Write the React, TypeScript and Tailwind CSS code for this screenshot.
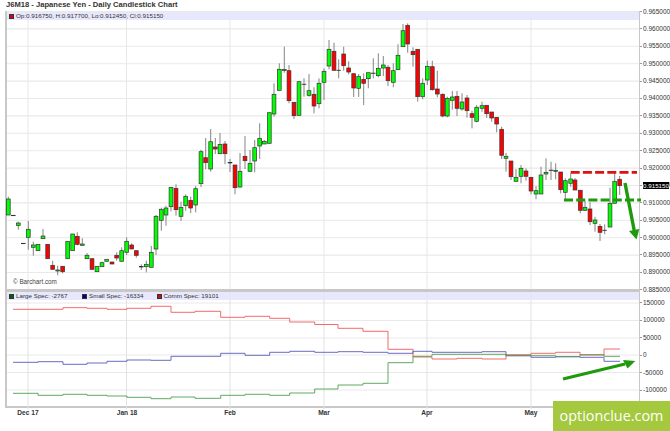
type Candle = [number, number, number, number, number, "G" | "R"];

const candles: Candle[] = [
  [8.3,196.7,199,215,215,"G"],[13.3,215.3,215.3,215.6,215.6,"G"],[18.3,221.7,223,225.5,229.7,"G"],[23.3,243.3,243.3,243.6,243.6,"G"],
  [28.3,221,229.3,237.3,249.7,"G"],[33.3,241.7,245,247.3,255.7,"G"],[38,244.3,244.3,250.7,250.7,"G"],[43,229,236,238.7,238.7,"G"],
  [47.7,244.3,244.3,258.7,258.7,"R"],[52.7,260.7,265.3,269.3,269.3,"R"],[57.7,265.7,270,271,275.3,"G"],[62.7,266.3,266.3,271.7,273.3,"R"],
  [67.7,241.3,241.3,258.7,258.7,"G"],[72.7,234,234,250.7,250.7,"G"],[77.3,232.3,236.3,244.3,245.3,"R"],[82.3,238.3,244,245.3,245.6,"G"],
  [87,253,255.3,258.7,258.7,"G"],[92,258.7,258.7,269.3,269.3,"R"],[97,266.3,266.3,271.7,271.7,"G"],[102,261.7,262.7,266.7,266.7,"G"],
  [106.7,259.3,259.3,261.3,261.3,"G"],[112,262,262,264,264,"R"],[116.7,252.3,255.3,258,260.7,"R"],[121.7,247.3,250.7,261.3,261.3,"G"],
  [126.7,237.3,241.3,252.3,255,"G"],[131.7,243.3,245,249,249,"R"],[136.3,250.7,250.7,255.3,257.7,"R"],[141.3,264.3,266.6,267,270,"R"],
  [146.3,260.7,264.3,266.7,272.3,"G"],[151.3,246,252.3,267.3,267.3,"G"],[156,215,216.3,249,255,"G"],[161.3,207.7,209.3,220.3,230.7,"G"],
  [166,205.7,208,215,225.7,"G"],[171,187.3,187.3,206.7,211.3,"G"],[176,184.3,188.3,209.7,215.7,"R"],[181,201.7,207.3,216.3,221,"G"],
  [185.7,194.3,196.3,205.7,210.7,"G"],[190.7,196.7,200.3,208,213,"R"],[195.7,186,188.7,205,212.3,"G"],[201,149.7,151.7,183.7,187,"G"],
  [205.7,138,157.7,162.7,169.3,"R"],[210.7,129,141.7,169,171.7,"G"],[215.3,138,147,149,154,"R"],[220,133,144.5,153.7,153.7,"G"],
  [225,141,144,153.7,164.3,"R"],[230,159,162.4,163,172,"R"],[235,165,165,187.7,194.3,"R"],[240,153,171.3,187,187.7,"G"],
  [245,136,156.3,160.7,169,"R"],[250,150,163.3,171.3,171.3,"G"],[254.7,140,147.7,161,172.3,"G"],[259.7,123.3,138.3,146,159,"G"],
  [264.3,140,141.3,144,144,"G"],[269.3,112.7,112.7,143.3,143.3,"G"],[274,83.3,94.3,114,116.7,"G"],[279.3,63.3,69.3,90.3,90.3,"G"],
  [284.3,46.7,69.5,70.5,72.7,"G"],[289,65,70.7,100.7,103.3,"R"],[294,102.3,102.3,115.7,119,"R"],[299,81.7,81.7,115.3,115.3,"G"],
  [304,78.3,84.2,84.6,96.7,"G"],[309,74,90.7,95.3,96.7,"G"],[314,87.3,94.3,106,113.3,"R"],[319,78.3,83.3,103.7,108.3,"G"],
  [324,68.3,71.3,82.3,100,"G"],[329,40,49.3,66,69.3,"G"],[334,42.7,51.3,70.3,70.3,"R"],[338.7,59.3,70.2,70.6,78.3,"R"],
  [343.7,46.7,54,65.7,70.7,"R"],[348.7,61.3,68,72,74.3,"R"],[353.7,73.7,73.7,88,97,"R"],[358.7,74,76.3,88.3,97,"G"],
  [363.7,73.3,79.3,83.3,105,"R"],[368.3,72.7,72.7,78.7,88.3,"G"],[373.3,58.3,73.1,73.6,78.3,"G"],[378.3,53.3,68.3,75.7,77.3,"G"],
  [383.3,56,65,68,76,"G"],[388,65,67.3,80.7,86,"R"],[393.3,63.3,70.7,82.3,87.3,"G"],[398,44.3,55.3,69.7,69.7,"G"],
  [403,24,30.7,46.7,46.7,"G"],[407.7,23.3,25.3,44,52.7,"R"],[413,47.3,51.3,54.7,66.7,"R"],[417.7,49.3,49.3,96.7,101.7,"R"],
  [422.7,78.3,83.3,96.7,99.3,"G"],[427.3,60.7,66.3,80,85,"G"],[432.3,60.7,66.7,89.7,90.7,"R"],[437.3,70.7,89,94,97.3,"R"],
  [442.7,93.3,94.3,116,117.3,"R"],[447.3,96.7,98.3,116,117.3,"G"],[452.3,91,97,100.3,109.7,"G"],[457,91,96.3,108.3,116,"R"],
  [462,93.3,102,109,110.7,"G"],[467,95,98,110.7,117.7,"R"],[472,110.7,113.7,117.3,128.3,"R"],[476.7,105,107.3,121.3,122.3,"G"],
  [482,101.7,105.7,108.3,111.7,"G"],[486.7,105.3,105.3,113.7,118,"R"],[491.7,112,112,118,121.7,"R"],[496.7,117.3,117.3,124,132.3,"R"],
  [501.7,126.7,129.3,155.3,159,"R"],[506,153,156.3,158.3,171.7,"G"],[511,161,161,176.7,180,"R"],[516,169,177.3,181.3,181.7,"G"],
  [521,165,168.3,176.3,183.3,"G"],[526,168.3,171,176.3,180.7,"R"],[531,177.3,177.3,191,194.3,"R"],[536,186,190.7,194,199.3,"G"],
  [541,166.7,175,194,194,"G"],[546,158.3,172.3,174,180,"G"],[551,161.7,170.1,170.5,180,"R"],[555.7,163.3,170.3,171.3,179.3,"G"],
  [560.7,172,172,189.7,193.3,"R"],[565.3,178.3,180.7,192.3,200,"G"],[570.7,173.3,179,183.3,186.7,"G"],[575,178,180,190,190,"R"],
  [580.3,190.3,190.3,210.3,213.3,"R"],[585,200.7,207.3,210.3,210.6,"G"],[590,202.3,209,221.7,225,"R"],[595,216.7,220,223.3,231.7,"G"],
  [600,224,226.3,232.3,241,"R"],[604.7,224.3,230.2,230.6,234.3,"R"],[610,187.7,203.3,227,227,"G"],[614.7,171.7,181.3,203.3,203.3,"G"],
  [619.7,176,179.3,185.7,195,"R"],
];

const priceGrid = Array.from({ length: 17 }, (_, i) => 11.5 + i * 17.4);
const priceLabels = ["0.965000","0.960000","0.955000","0.950000","0.945000","0.940000","0.935000","0.930000","0.925000","0.920000","0.915000","0.910000","0.905000","0.900000","0.895000","0.890000","0.885000"];
const specLabels = ["150000","100000","50000","0","-50000","-100000"];
const specGrid = [303, 320.5, 338, 355, 372.5, 390];
const xGrid = [28, 126.5, 230, 324, 427, 531];

const red: [number, number][] = [[13,309.3],[63,309.3],[87,307.7],[107,308.3],[127,309.3],[151,308.3],[171,306.3],[195,312.3],[220.7,311.3],[245,317.3],[269.7,316.3],[289.7,318.3],[314.7,322],[338,324.5],[363,328.3],[388,331.3],[413,349.3],[432,357],[457,359],[482,358.3],[506,359],[531,354.7],[555.7,353.3],[580,352.3],[604,355],[620,349]];
const blue: [number, number][] = [[13,362.3],[38,362.3],[63,361.7],[87,364.3],[107,363],[127,361.3],[151,360],[171,360.3],[220.7,356.3],[245,353.3],[269.7,355.3],[289.7,352.3],[314.7,351.3],[338,352.3],[363,351.7],[388,352.3],[413,353.3],[432,351.3],[482,352.3],[506,351.7],[531,355.7],[555.7,357.3],[580,356.7],[604,357.3],[620,361.3]];
const green: [number, number][] = [[13,393.3],[38,393.3],[63,395.3],[87,394.3],[107,395.3],[127,396],[151,397.3],[171,398.7],[195,397],[220.7,398.3],[245,395.3],[269.7,394.3],[289.7,395.3],[314.7,393],[338,389],[363,385],[388,383.3],[413,362.7],[432,356.3],[506,354.3],[531,355.7],[555.7,355.7],[580,356.7],[604,354.7],[620,356.3]];

function stepPath(pts: [number, number][]) {
  let d = `M${pts[0][0]} ${pts[0][1]}`;
  for (let i = 1; i < pts.length; i++) {
    d += `V${pts[i][1]}H${pts[i][0]}`;
  }
  return d;
}

function Swatch({ className }: { className: string }) {
  return <span className={`block w-[5px] h-[5px] border border-[#333] ${className}`} />;
}

export default function App() {
  return (
    <div className="relative flex w-[670px] h-[431px] overflow-hidden bg-white font-['Liberation_Sans',sans-serif] text-[#222]">
      <div className="w-[640px] pl-[5px] flex flex-col">
        <div className="h-[11px] pl-px text-[7.6px] leading-[10px] font-bold text-[#333] whitespace-nowrap">
          J6M18 - Japanese Yen - Daily Candlestick Chart
        </div>

        <div className="relative h-[278px] border-l-2 border-r border-t border-[#c8c8c8]">
          <svg width={632} height={277} className="block overflow-visible">
            <g transform="translate(-7,-12)">
              {priceGrid.map((y) => (
                <line key={y} x1={7} x2={639} y1={y} y2={y} stroke="#e9e9e9" strokeWidth={1.1} />
              ))}
              {xGrid.map((x) => (
                <line key={x} x1={x} x2={x} y1={12} y2={289} stroke="#e8e8e8" strokeWidth={1} />
              ))}
              {candles.map(([x, hi, top, bot, lo, c]) => (
                <g key={x}>
                  <line x1={x} x2={x} y1={hi} y2={lo} stroke="#777" strokeWidth={0.9} />
                  <rect
                    x={x - 1.9}
                    y={top}
                    width={3.8}
                    height={Math.max(bot - top, 0.4)}
                    fill={c === "G" ? "#00ff00" : "#ff0000"}
                    stroke="#333"
                    strokeWidth={0.7}
                  />
                </g>
              ))}
              <line x1={570.7} x2={637} y1={172.3} y2={172.3} stroke="#e01010" strokeWidth={2.8} strokeDasharray="9 3.2" />
              <line x1={564} x2={641} y1={200} y2={200} stroke="#1f9a0e" strokeWidth={2.8} strokeDasharray="9 3.2" />
              <line x1={625} y1={183} x2={634.5} y2={232} stroke="#1f9a0e" strokeWidth={3.4} />
              <polygon points="629,231 639.3,229 636.5,239.5" fill="#1f9a0e" />
            </g>
          </svg>
          <div className="absolute left-0 right-0 top-0 h-[8px] bg-[#e4e4fb]/85 flex items-center gap-[2px] pl-[2px] text-[6.26px] leading-[8px] text-[#333]">
            <Swatch className="bg-[#e00000]" />
            <span className="whitespace-nowrap">Op:0.916750, H:0.917700, Lo:0.912450, Cl:0.915150</span>
          </div>
          <div className="absolute left-[6px] bottom-[3px] text-[6.3px] leading-[8px] text-[#444] whitespace-nowrap">© Barchart.com</div>
        </div>

        <div className="relative h-[119px] border-l-2 border-r border-t-[3px] border-b-2 border-[#c8c8c8]">
          <svg width={632} height={114} className="block overflow-visible">
            <g transform="translate(-7,-292)">
              {specGrid.map((y) => (
                <line key={y} x1={7} x2={639} y1={y} y2={y} stroke="#e9e9e9" strokeWidth={1.1} />
              ))}
              {xGrid.map((x) => (
                <line key={x} x1={x} x2={x} y1={292} y2={409.5} stroke="#e2e2e2" strokeWidth={1} />
              ))}
              <path d={stepPath(red)} fill="none" stroke="#f25a5a" strokeWidth={0.9} />
              <path d={stepPath(blue)} fill="none" stroke="#5a5ac0" strokeWidth={0.9} />
              <path d={stepPath(green)} fill="none" stroke="#4f9f4f" strokeWidth={0.9} />
              <line x1={563} y1={379} x2={625} y2={364} stroke="#1f9a0e" strokeWidth={3.2} />
              <polygon points="623,360 635.3,361 627.5,368.5" fill="#1f9a0e" />
            </g>
          </svg>
          <div className="absolute left-0 right-0 top-0 h-[8px] bg-[#e4e4fb]/85 flex items-center pl-[2px] text-[6.26px] leading-[8px] text-[#333]">
            <div className="w-[73px] flex items-center gap-[2px]">
              <Swatch className="bg-[#006400]" />
              <span className="whitespace-nowrap">Large Spec: -2767</span>
            </div>
            <div className="w-[74.5px] flex items-center gap-[2px]">
              <Swatch className="bg-[#000080]" />
              <span className="whitespace-nowrap">Small Spec: -16334</span>
            </div>
            <div className="flex items-center gap-[2px]">
              <Swatch className="bg-[#c01010]" />
              <span className="whitespace-nowrap">Comm Spec: 19101</span>
            </div>
          </div>
        </div>

        <div className="flex pt-[1px] pl-[3px] text-[6.6px] leading-[8px] font-bold text-[#333]">
          <span className="w-[40px] text-center">Dec 17</span>
          <span className="ml-[59px] w-[40px] text-center">Jan 18</span>
          <span className="ml-[63px] w-[40px] text-center">Feb</span>
          <span className="ml-[54px] w-[40px] text-center">Mar</span>
          <span className="ml-[63px] w-[40px] text-center">Apr</span>
          <span className="ml-[64px] w-[40px] text-center">May</span>
        </div>
      </div>

      <div className="flex-1 flex flex-col pt-[7.5px] text-[6.5px] leading-[8px] text-[#333]">
        <div className="flex flex-col gap-[9.4px]">
          {priceLabels.map((l) => (
            <div key={l} className="h-[8px] flex items-center gap-[1px] whitespace-nowrap">
              <span className="w-[2px] h-px bg-[#999]" />
              {l}
            </div>
          ))}
        </div>
        <div className="mt-[5px] flex flex-col gap-[9.5px]">
          {specLabels.map((l) => (
            <div key={l} className="h-[8px] flex items-center gap-[1px] whitespace-nowrap">
              <span className="w-[2px] h-px bg-[#999]" />
              {l}
            </div>
          ))}
        </div>
      </div>

      <div className="absolute right-[1px] top-[182px] w-[26px] h-[7px] bg-black text-white text-[6.2px] leading-[7px] text-center">0.915150</div>

      <div className="absolute right-0 bottom-0 w-[117px] h-[30px] bg-[#a4c83e] text-white text-[14.4px] leading-[30px] text-center font-['Open_Sans',sans-serif] whitespace-nowrap">
        optionclue.com
      </div>
    </div>
  );
}
